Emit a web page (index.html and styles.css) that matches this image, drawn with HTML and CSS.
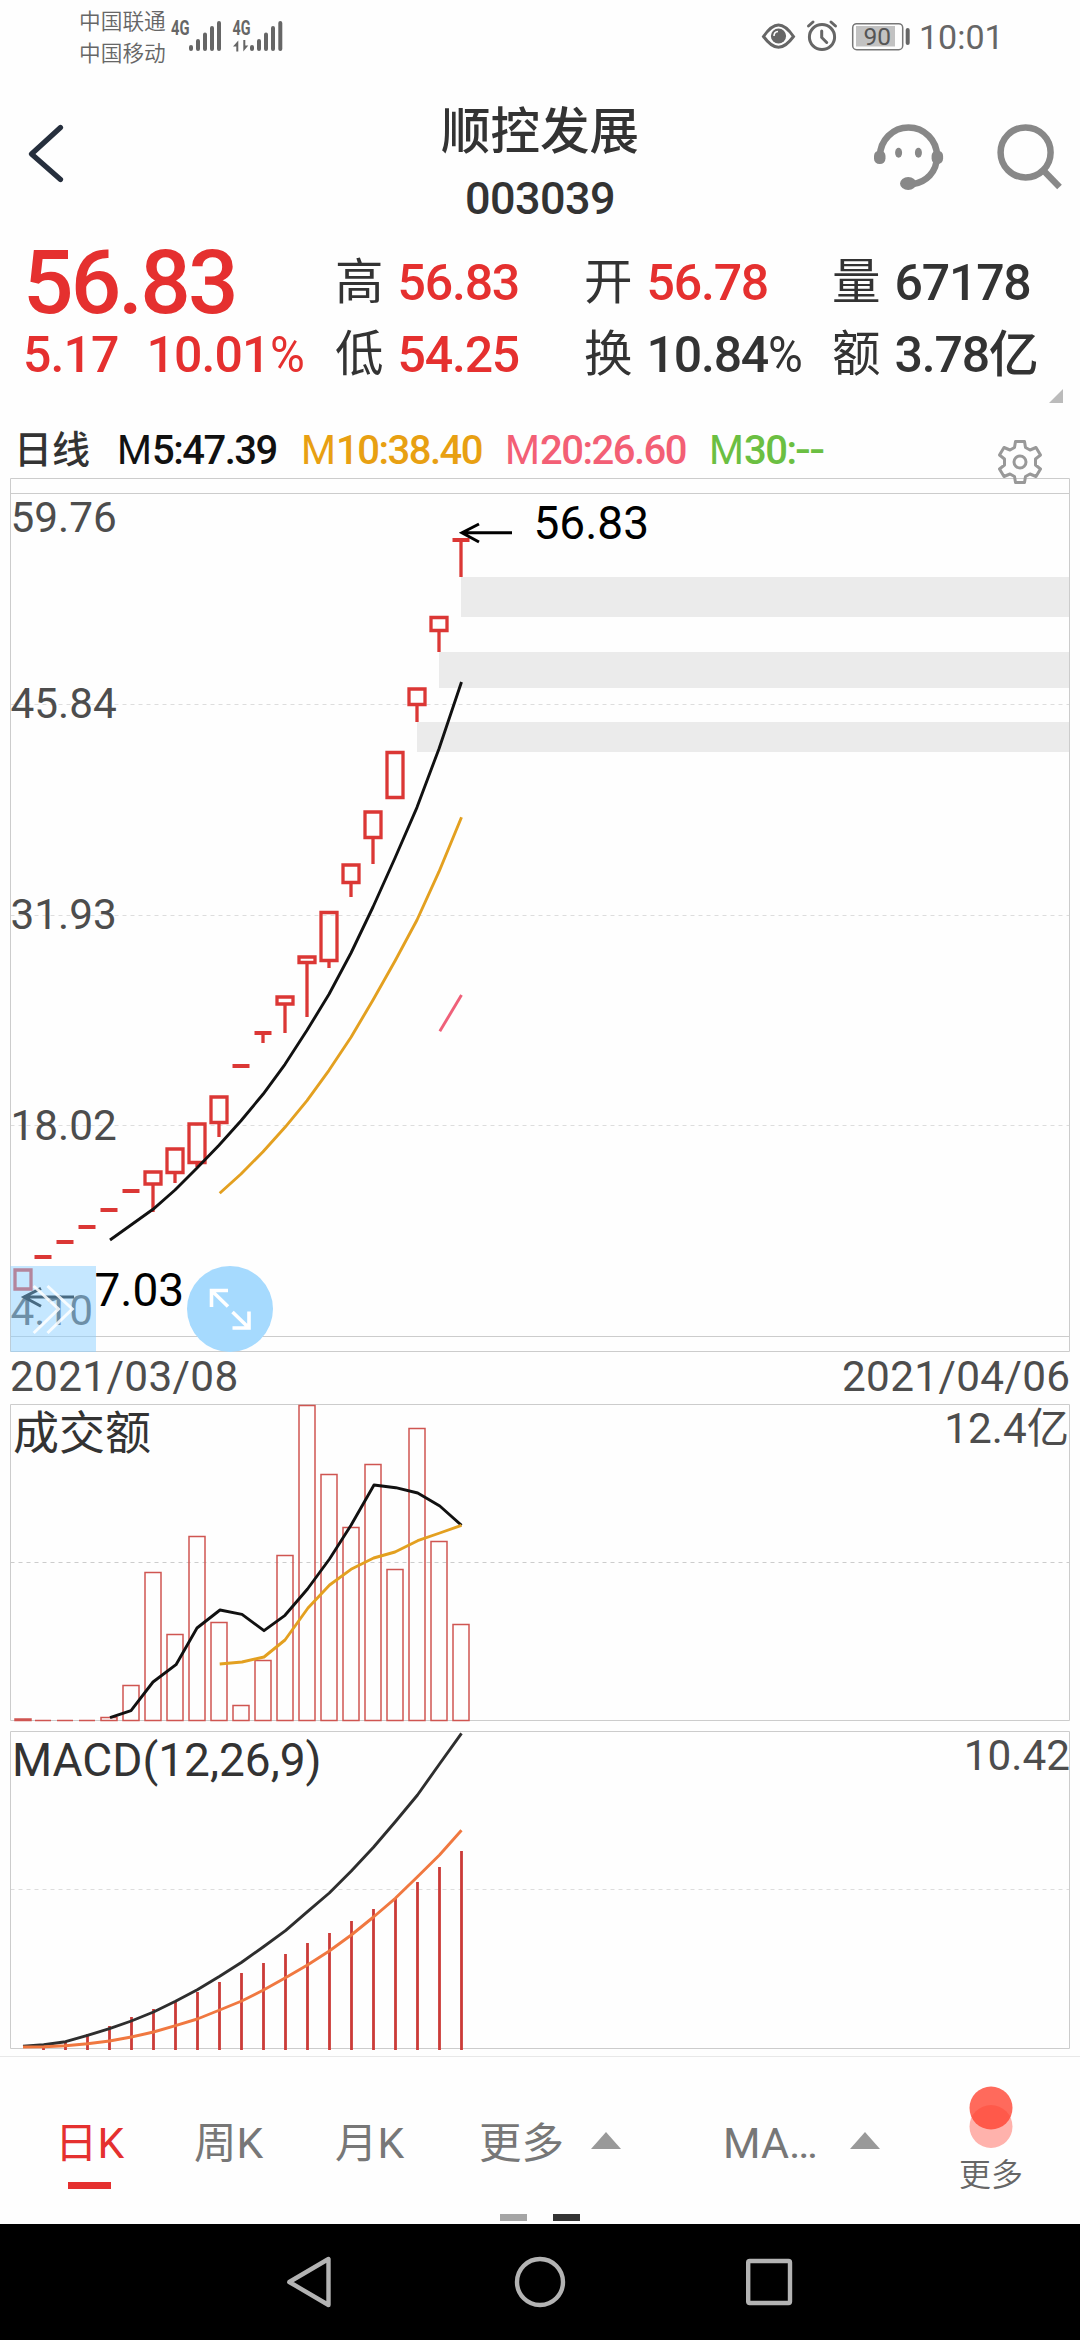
FILE: index.html
```html
<!DOCTYPE html>
<html lang="zh-CN">
<head>
<meta charset="utf-8">
<title>顺控发展 003039</title>
<link rel="stylesheet" href="styles.css">
</head>
<body>
<div class="screen">
  <div class="status">
    <div class="carriers"><span>中国联通</span><span>中国移动</span></div>
    <svg class="signal" width="116" height="72" viewBox="170 0 116 72">
      <g class="net"><text x="171" y="35" textLength="18.5" lengthAdjust="spacingAndGlyphs">4G</text><text x="232.5" y="35" textLength="18" lengthAdjust="spacingAndGlyphs">4G</text></g>
      <path class="bars" d="M191 47v2M198 41v8M205 34.5v14.5M212 28v21M219 23v26M252 47v2M259 41v8M266 34.5v14.5M273 28v21M280.3 23v26"/>
      <path class="updown" d="M238.3 51.5V40.5l-5.3 6h3.3v5zM243.300 40v11.500l5-6h-3V40z"/>
    </svg>
    <div class="status-right">
      <svg width="150" height="72" viewBox="761 0 150 72">
        <path class="ln3" d="M763.500 36.500C769 28.500 773 25 778.500 25s9.500 3.500 15 11.500C788 44 784 47.300 778.500 47.300S769 44 763.500 36.500z"/>
        <circle cx="778.500" cy="36" r="7.600" fill="#666"/>
        <path d="M774 36a4.500 4.500 0 0 1 4-4.500" stroke="#fff" stroke-width="1.600" fill="none"/>
        <circle class="ln3" cx="822" cy="37" r="12.600"/>
        <path class="ln3 cap" d="M821.700 31v6.500l5 5M808.500 26l4.500-4M835.500 26l-4.500-4"/>
        <rect x="856" y="26" width="39" height="20.500" fill="#c2c2c2"/>
        <rect x="852.700" y="23.700" width="50" height="26" rx="4" fill="none" stroke="#777" stroke-width="1.500"/>
        <rect x="905.700" y="28" width="4" height="17" rx="2" fill="#666"/>
        <text class="bat" x="863.500" y="45">90</text>
      </svg>
      <span class="clock">10:01</span>
    </div>
  </div>

  <header class="head">
    <svg class="back" width="60" height="80" viewBox="10 114 60 80"><path d="M60.500 127.500L31.500 154L60.500 179.500"/></svg>
    <div class="title"><div class="name">顺控发展</div><div class="code">003039</div></div>
    <div class="actions">
      <svg width="72" height="70" viewBox="872 120 72 70">
        <g fill="none" stroke="#888" stroke-width="6.500"><path d="M880 156a28.500 28.500 0 0 1 57 0c0 16-11 26.500-25 28.300"/></g>
        <g fill="#888"><rect x="874" y="150.500" width="11.500" height="13.500" rx="5.500"/><rect x="931.600" y="150.500" width="11.500" height="13.500" rx="5.500"/><ellipse cx="898.600" cy="152.700" rx="3.500" ry="5"/><ellipse cx="918.400" cy="152.700" rx="3.500" ry="5"/><ellipse cx="908.200" cy="183.500" rx="8.200" ry="6.500"/></g>
      </svg>
      <svg width="68" height="70" viewBox="995 120 68 70"><g fill="none" stroke="#888" stroke-width="6.500"><circle cx="1025.600" cy="152.400" r="25"/><path d="M1043.500 170.500L1059.500 187"/></g></svg>
    </div>
  </header>

  <section class="quote">
    <div class="price up">56.83</div>
    <div class="cell"><i>高</i><b class="up">56.83</b></div>
    <div class="cell"><i>开</i><b class="up">56.78</b></div>
    <div class="cell"><i>量</i><b>67178</b></div>
    <div class="change up"><b>5.17</b><b>10.01<em>%</em></b></div>
    <div class="cell"><i>低</i><b class="up">54.25</b></div>
    <div class="cell"><i>换</i><b>10.84<em>%</em></b></div>
    <div class="cell"><i>额</i><b>3.78亿</b></div>
  </section>
  <div class="expander"><svg width="14" height="14" viewBox="0 0 14 14"><path d="M14 0V14H0z" fill="#bbb"/></svg></div>

  <div class="legend">
    <span class="period">日线</span>
    <span class="m5">M<b>5:47.39</b></span>
    <span class="m10">M<b>10:38.40</b></span>
    <span class="m20">M<b>20:26.60</b></span>
    <span class="m30">M<b>30:<span class="none">--</span></b></span>
    <svg class="gear" width="48" height="48" viewBox="-24 -24 48 48">
      <path d="M-4.500-20.500H4.500L5.500-14.500L10-12L16-14.500L20.500-7L15.500-3V3L20.500 7L16 14.500L10 12L5.500 14.500L4.500 20.500H-4.500L-5.500 14.500L-10 12L-16 14.500L-20.500 7L-15.500 3V-3L-20.500-7L-16-14.500L-10-12L-5.500-14.500z"/><circle r="6"/>
    </svg>
  </div>

  <svg class="kline" width="1080" height="926" viewBox="0 478 1080 926">
    <path class="grid" d="M10.500 704.500H1069M10.500 915.500H1069M10.500 1125.500H1069"/>
    <path class="frame" d="M10.500 478.500H1069.500V1351.500H10.500zM10.500 493.500H1069.500M10.500 1336.500H1069.500"/>
    <path fill="#ebebeb" d="M461 577H1069V617H461zM439 652H1069V688H439zM417 722H1069V752H417z"/>
    <g class="axis">
      <text x="10.500" y="532">59.76</text><text x="10.500" y="718">45.84</text><text x="10.500" y="928.500">31.93</text><text x="10.500" y="1139.500">18.02</text><text x="10.500" y="1325">4.10</text>
      <text class="date" x="10" y="1390.500">2021/03/08</text><text class="date end" x="1070.500" y="1390.500">2021/04/06</text>
    </g>
    <path class="candle" d="M15 1270h16v19h-16zM145 1172h16v12h-16zM153 1184V1212M167 1149h16v23.500h-16zM175 1172V1183M189 1124h16v38.500h-16zM197 1162V1167M211 1097h16v25.500h-16zM219 1122V1137M277 997h16v7h-16zM285 1004V1033M299 957h16v5.500h-16zM307 962V1017M321 912.500h16v48h-16zM329 960V968M343 865h16v17.500h-16zM351 882V897M365 812h16v25.500h-16zM373 837V864M387 752.500h16v45h-16zM409 689h16v15.500h-16zM417 704V722M431 617.500h16v13h-16zM439 630V652M461 540V577M263 1033V1043"/>
    <path class="dash" d="M34.500 1257h17M56.500 1242h17M78.500 1227h17M100.500 1210h17M122.500 1191h17M232.500 1066h17M254.500 1033h17M452.500 540h17"/>
    <polyline class="ma k" points="110,1240 131,1225 153,1209.300 175,1190 197,1168 219,1145.300 241,1120.700 263,1094.300 285,1064.300 307,1030.300 329,994.300 351,953 373,907 395,858 417,807.300 439,748.700 461.500,682"/>
    <polyline class="ma o" points="219.700,1193.300 241,1174 263,1151.700 285,1127.300 307,1100.700 329,1070.300 351,1037.300 373,1000 395,961 417,920 439,871.700 461.500,817.300"/>
    <polyline class="ma p" points="439.800,1031.300 461.500,995"/>
    <path class="arrow" d="M512 532.700H462M479 524L462 532.700L479 542M74 1297H24M41 1288.300L24 1297L41 1306.300"/>
    <g class="mark"><text x="533.500" y="539">56.83</text><text x="94.500" y="1305.700">7.03</text></g>
    <rect x="10.500" y="1266" width="85.500" height="86" fill="rgb(141,208,255)" fill-opacity=".51"/>
    <path class="chev" d="M33.700 1286L58.500 1309L33.700 1333M47.500 1286L72.300 1309L47.500 1333"/>
    <circle cx="230" cy="1309" r="43" fill="#a6dafe"/>
    <path class="full" d="M211.500 1307V1290.500H228M211.500 1290.500L228 1306.500M249 1311.500V1328H232.500M249 1328L232.500 1312"/>
  </svg>

  <svg class="volume" width="1080" height="327" viewBox="0 1404 1080 327">
    <path class="grid dark" d="M10.500 1562.500H1069"/>
    <path class="frame" d="M10.500 1404.500H1069.500V1720.500H10.500z"/>
    <text class="ttl" x="13" y="1448.500">成交额</text><text class="axis end" x="1069" y="1443">12.4亿</text>
    <path class="vol" d="M15 1719h16v1.500h-16zM35 1720.500h16M57 1720.500h16M79 1720.500h16M101 1717.500h16v3h-16zM123 1685.500h16v35h-16zM145 1572.500h16v148h-16zM167 1634.500h16v86h-16zM189 1536.500h16v184h-16zM211 1622.500h16v98h-16zM233 1705.500h16v15h-16zM255 1660.500h16v60h-16zM277 1555.500h16v165h-16zM299 1405.500h16v315h-16zM321 1474.500h16v246h-16zM343 1527.500h16v193h-16zM365 1464.500h16v256h-16zM387 1569.500h16v151h-16zM409 1428.500h16v292h-16zM431 1541.500h16v179h-16zM453 1624.500h16v96h-16z"/>
    <polyline class="ma k" points="110,1717.700 131,1710.700 153,1682 176,1664.700 197,1628 220,1610 242,1614.300 264,1630.700 285,1615.300 307.500,1589 329.500,1559 351,1525.300 374,1485 395.700,1487.700 417.700,1493 439.800,1506 461.500,1525.300"/>
    <polyline class="ma o" points="219.700,1664 242,1662 264,1657 285,1640 308,1608 329.600,1585 351,1569.300 373.700,1558 395,1552 417.700,1540.700 439.800,1533 461.500,1525.300"/>
  </svg>

  <svg class="macd" width="1080" height="325" viewBox="0 1731 1080 325">
    <path class="grid" d="M10.500 1889.500H1069"/>
    <path class="frame" d="M10.500 1731.500H1069.500V2048.500H10.500z"/>
    <text class="ttl" x="12" y="1775.500">MACD(12,26,9)</text><text class="axis end" x="1070" y="1769.500">10.42</text>
    <path class="hist" d="M43.500 2047v3M65.500 2042v8M87.500 2034v16M109.500 2026v24M131.500 2017V2050M153.500 2009V2050M175.500 2001V2050M197.500 1992V2050M219.500 1982V2050M241.500 1973V2050M263.500 1963V2050M285.500 1954V2050M307.500 1943V2050M329.500 1933V2050M351.500 1921V2050M373.500 1909V2050M395.500 1898V2050M417.500 1882V2050M439.500 1867V2050M461.500 1851V2050"/>
    <polyline class="ma d" points="23,2046.300 43.700,2044.700 65.500,2041.700 87.500,2035.300 109.500,2028.700 131.300,2021 153.500,2012 175.500,2001.300 197.300,1989.700 219.700,1976.300 241.700,1962.300 263.500,1946.700 285.500,1930.700 307.500,1911.700 329.300,1893 351.300,1871 373.500,1847.300 395.300,1821.700 417.500,1795 439.500,1764 461.500,1733.300"/>
    <polyline class="ma e" points="23,2047 43.700,2046.700 65.500,2045.700 87.500,2043.700 109.500,2041 131.300,2037 153.500,2032 175.500,2025.700 197.300,2019 219.700,2010 241.700,2001 263.500,1990 285.500,1977.700 307.500,1965 329.300,1951 351.300,1935 373.500,1917 395.300,1898.300 417.500,1876.700 439.500,1855 461.500,1830.300"/>
  </svg>

  <div class="tabs">
    <div class="tab on">日K</div>
    <div class="tab">周K</div>
    <div class="tab">月K</div>
    <div class="tab drop">更多<svg width="30" height="17" viewBox="0 0 30 17"><path d="M15 0L30 17H0z" fill="#999"/></svg></div>
    <div class="tab drop ind">MA…<svg width="30" height="17" viewBox="0 0 30 17"><path d="M15 0L30 17H0z" fill="#999"/></svg></div>
    <div class="more">
      <svg width="44" height="62" viewBox="0 0 44 62"><circle cx="22" cy="40.500" r="21.500" fill="#ffb2ac"/><circle cx="22" cy="22" r="21.500" fill="rgb(255,64,46)" fill-opacity=".78"/></svg>
      <span>更多</span>
    </div>
  </div>
  <div class="pager"><span></span><span class="cur"></span></div>

  <div class="nav">
    <svg width="1080" height="116" viewBox="0 2224 1080 116">
      <path d="M328.500 2259V2305L289.300 2282z"/><circle cx="540" cy="2282" r="23"/><rect x="748.200" y="2261" width="41.800" height="42" rx="1.500"/>
    </svg>
  </div>
</div>
</body>
</html>
```
FILE: styles.css
```css
* { box-sizing: border-box; }
body { margin: 0; background: #fff; font-family: Roboto, "Noto Sans CJK SC", sans-serif; color: #333; }
svg { display: block; flex: none; }
i, em { font-style: normal; }
.screen { width: 1080px; height: 2340px; overflow: hidden; display: flex; flex-direction: column; background: #fefefe; }
.up { color: #e5302f; }

.status { height: 72px; display: flex; padding-left: 79px; color: #666; }
.carriers { display: flex; flex-direction: column; padding-top: 6px; width: 91px; font-size: 21.7px; line-height: 32px; font-weight: 350; white-space: nowrap; }
.net { font-weight: 700; font-size: 20px; fill: #666; }
.bars { fill: none; stroke: #666; stroke-width: 4; stroke-linecap: round; }
.updown { fill: #666; }
.status-right { margin-left: auto; padding-right: 80px; display: flex; }
.ln3 { fill: none; stroke: #666; stroke-width: 3; }
.cap { stroke-linecap: round; }
.bat { font-size: 24.5px; fill: #555; }
.clock { width: 89px; padding-left: 8px; font-size: 34px; line-height: 75px; white-space: nowrap; }

.head { height: 175px; display: grid; grid-template-columns: 270px 1fr 270px; }
.back { margin: 42px 0 0 10px; }
.back path { fill: none; stroke: #262f3d; stroke-width: 5.200; stroke-linecap: round; stroke-linejoin: round; }
.title { text-align: center; padding-top: 24px; }
.name { font-size: 49.500px; line-height: 72px; font-weight: 500; }
.code { font-size: 45px; line-height: 62px; font-weight: 500; letter-spacing: -.6px; }
.actions { display: flex; gap: 51px; padding: 48px 0 0 62px; }

.quote { display: grid; grid-template-columns: 312px 249px 248px 1fr; grid-auto-rows: 72px; padding-left: 23px; line-height: 72px; font-size: 50px; white-space: nowrap; }
.quote b { font-weight: 500; letter-spacing: -1.200px; }
.quote em { font-weight: 400; display: inline-block; transform: scaleX(.95); transform-origin: left; }
.price { font-size: 89px; font-weight: 500; letter-spacing: -2.900px; }
.change { display: flex; gap: 28px; }
.change b { letter-spacing: -.9px; }
.cell { display: flex; gap: 14px; }
.cell i { font-size: 48.500px; width: 48.500px; font-weight: 400; }

.expander { height: 19px; display: flex; justify-content: flex-end; padding-right: 17px; align-items: flex-start; }
.expander svg { margin-top: -2px; }
.legend { height: 68px; display: flex; font-size: 40px; line-height: 81px; white-space: nowrap; position: relative; }
.legend b { font-weight: 500; letter-spacing: -1.500px; }
.period { width: 117px; padding-left: 14px; font-size: 38px; font-weight: 500; }
.m5 { width: 184px; color: #111; }
.m10 { width: 204px; color: #e8a012; }
.m20 { width: 204px; color: #f35f75; }
.m30 { color: #6bbf42; }
.none { display: inline-block; transform: scaleX(1.170); transform-origin: left; }
.gear { position: absolute; left: 996px; top: 28px; z-index: 2; fill: none; stroke: #999; stroke-width: 3; stroke-linejoin: round; }

.frame { fill: none; stroke: #ccc; stroke-width: 1; }
.grid { fill: none; stroke: #ddd; stroke-width: 1.200; stroke-dasharray: 4 4; }
.dark { stroke: #ccc; }
.axis { font-size: 42.300px; fill: #4d4d4d; }
.date { letter-spacing: .35px; }
.end { text-anchor: end; }
.candle { fill: none; stroke: #db3735; stroke-width: 3.300; }
.dash { fill: none; stroke: #db3735; stroke-width: 4; }
.ma { fill: none; stroke-width: 2.900; stroke-linejoin: round; }
.k { stroke: #111; }
.o { stroke: #e3a020; }
.p { stroke: #ef6079; }
.d { stroke: #2e2e2e; }
.e { stroke: #f07840; }
.arrow { fill: none; stroke: #000; stroke-width: 3; }
.mark { font-size: 46px; fill: #000; }
.chev { fill: none; stroke: #fff; stroke-opacity: .85; stroke-width: 3; }
.full { fill: none; stroke: #fff; stroke-width: 3.600; }
.ttl { font-size: 46px; fill: #333; }
.vol { fill: none; stroke: #cf5551; stroke-width: 1.500; }
.hist { fill: none; stroke: #cb3b38; stroke-width: 2.800; }

.tabs { height: 158px; border-top: 1px solid #e8e8e8; display: flex; padding-left: 55px; color: #777; font-size: 42.500px; white-space: nowrap; flex: none; }
.tab { width: 139px; line-height: 173px; }
.on { color: #e5302f; position: relative; }
.on::after { content: ""; position: absolute; left: 13px; top: 125px; width: 43px; height: 7px; background: #e5302f; }
.tab:nth-child(3) { width: 145px; padding-left: 2px; }
.drop { display: flex; align-items: flex-start; width: 243px; }
.drop svg { margin: 75px 0 0 27px; }
.drop:nth-child(4) { padding-left: 1px; }
.ind { width: 239px; padding-left: 2px; font-size: 43px; }
.ind svg { margin-left: 32px; }
.more { display: flex; flex-direction: column; align-items: center; padding-top: 29px; width: 62px; font-size: 32px; line-height: 50px; }
.more span { margin-top: 2px; font-weight: 350; color: #666; }
.pager { height: 10px; display: flex; justify-content: center; gap: 26px; flex: none; }
.pager span { width: 27px; height: 7px; background: #a5a5a5; }
.pager .cur { background: #333; }
.nav { height: 116px; background: #000; flex: none; }
.nav svg { fill: none; stroke: #b3b3b3; stroke-width: 4.400; stroke-linejoin: round; }
```
